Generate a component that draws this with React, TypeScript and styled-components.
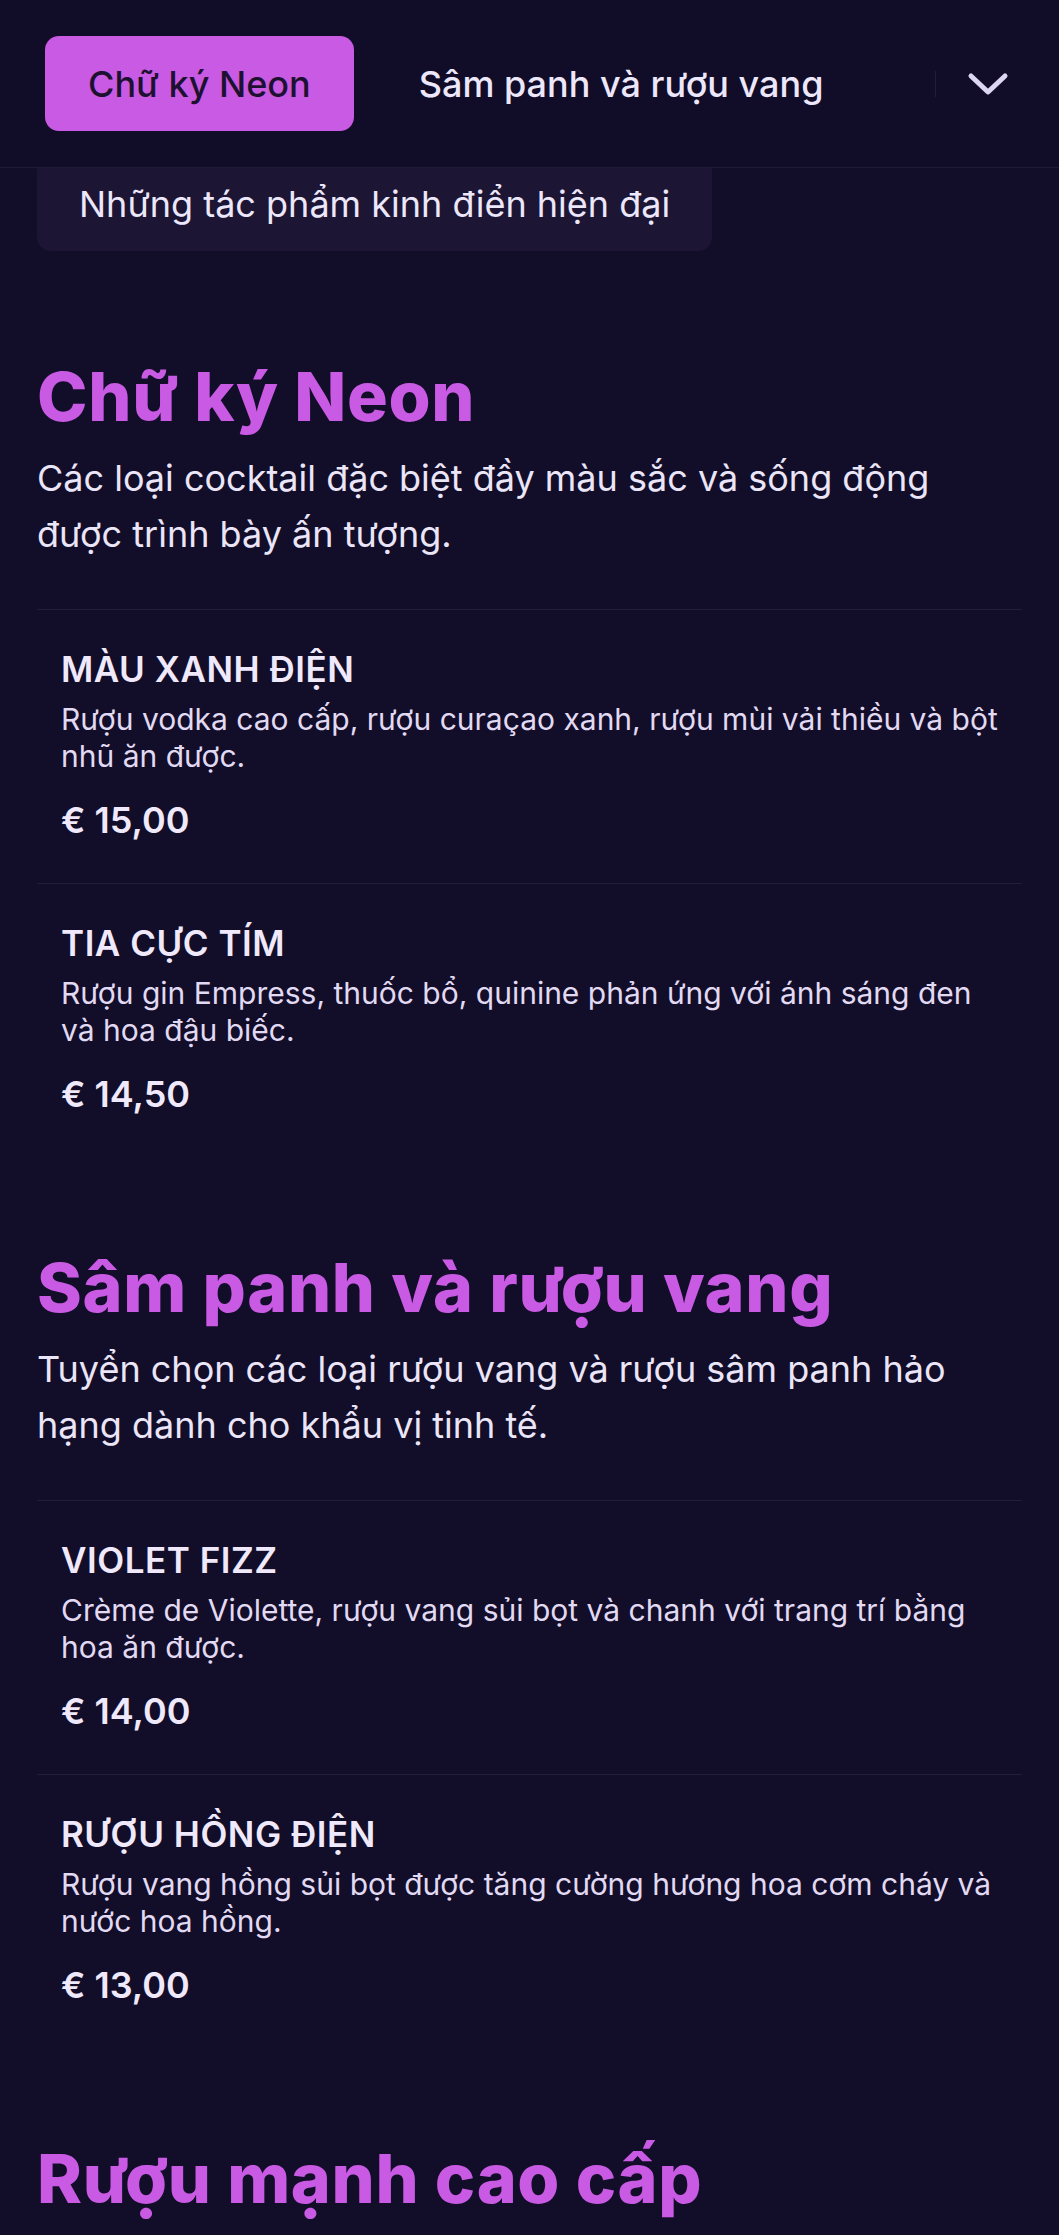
import React from 'react'
import styled, { createGlobalStyle } from 'styled-components'

const BG = '#120d29'
const HEADER_BG = '#110c27'
const ACCENT = '#c95ae3'
const TEXT = '#ece7fa'

const GlobalStyle = createGlobalStyle`
  * {
    box-sizing: border-box;
  }
  html,
  body {
    margin: 0;
    padding: 0;
    background: ${BG};
  }
  body {
    font-family: Inter, 'Noto Sans', sans-serif;
    -webkit-font-smoothing: antialiased;
    color: ${TEXT};
  }
`

const Shell = styled.div`
  display: flex;
  flex-direction: column;
  height: 100vh;
  overflow: hidden;
  background: ${BG};
`

const Header = styled.header`
  flex: none;
  display: flex;
  align-items: center;
  padding: 36px 20px 36px 45px;
  background: ${HEADER_BG};
  border-bottom: 1px solid #1f1a38;
`

const Tabs = styled.nav`
  position: relative;
  flex: 1;
  min-width: 0;
  display: flex;
  gap: 22px;
  overflow: hidden;
  white-space: nowrap;

  &::after {
    content: '';
    position: absolute;
    top: 0;
    right: 0;
    bottom: 0;
    width: 108px;
    background: linear-gradient(to right, rgba(17, 12, 39, 0), ${HEADER_BG} 90%);
    pointer-events: none;
  }
`

const Tab = styled.button<{ $active?: boolean }>`
  flex: none;
  height: 95px;
  padding: 0 43px;
  border: none;
  border-radius: 14px;
  font-family: inherit;
  font-size: 36px;
  font-weight: 500;
  cursor: pointer;
  background: ${({ $active }) => ($active ? ACCENT : 'transparent')};
  color: ${({ $active }) => ($active ? '#1c1131' : TEXT)};
`

const Separator = styled.span`
  flex: none;
  width: 1px;
  height: 26px;
  background: rgba(255, 255, 255, 0.07);
`

const ChevronButton = styled.button`
  flex: none;
  width: 103px;
  height: 95px;
  display: flex;
  align-items: center;
  justify-content: center;
  padding: 0;
  border: none;
  background: transparent;
  color: #dcd6f2;
  cursor: pointer;
`

const Scroll = styled.main`
  flex: 1;
  overflow-y: auto;
  scrollbar-width: none;

  &::-webkit-scrollbar {
    display: none;
  }
`

const SubNav = styled.div`
  display: flex;
  gap: 22px;
  padding: 0 37px;
  margin: -12px 0 15px;
`

const SubPill = styled.button`
  flex: none;
  height: 95px;
  padding: 0 42px;
  border: none;
  border-radius: 14px;
  background: #1c1534;
  color: ${TEXT};
  font-family: inherit;
  font-size: 36px;
  font-weight: 400;
`

const Section = styled.section`
  padding: 90px 37px 0;
`

const SectionTitle = styled.h2`
  margin: 0;
  font-size: 68px;
  font-weight: 800;
  line-height: 80px;
  letter-spacing: 0.01em;
  color: ${ACCENT};
`

const SectionDesc = styled.p`
  margin: 14px 0 0;
  max-width: 960px;
  font-size: 36px;
  line-height: 56px;
  color: #ebe5f8;
`

const ItemList = styled.ul`
  margin: 47px 0 0;
  padding: 0;
  list-style: none;
`

const Item = styled.li`
  padding: 40px 14px 42px 24px;
  border-top: 1px solid #231d3c;
`

const ItemName = styled.h3`
  margin: 0;
  font-size: 35px;
  font-weight: 600;
  line-height: 39px;
  letter-spacing: 0.015em;
  text-transform: uppercase;
  color: #efe9fb;
`

const ItemDesc = styled.p`
  margin: 12px 0 0;
  font-size: 30px;
  line-height: 37px;
  color: #e1daf2;
`

const Price = styled.div`
  margin-top: 24px;
  font-size: 36px;
  font-weight: 600;
  line-height: 42px;
  color: #efe9fb;
`

const ChevronDown = () => (
  <svg width="42" height="24" viewBox="0 0 42 24" fill="none">
    <polyline
      points="4,4 21,20 38,4"
      stroke="currentColor"
      strokeWidth="5"
      strokeLinecap="round"
      strokeLinejoin="round"
    />
  </svg>
)

type MenuItem = { name: string; desc: string; price: string }
type MenuSection = { id: string; title: string; desc: string; items: MenuItem[] }

const sections: MenuSection[] = [
  {
    id: 'neon',
    title: 'Chữ ký Neon',
    desc: 'Các loại cocktail đặc biệt đầy màu sắc và sống động được trình bày ấn tượng.',
    items: [
      {
        name: 'Màu xanh điện',
        desc: 'Rượu vodka cao cấp, rượu curaçao xanh, rượu mùi vải thiều và bột nhũ ăn được.',
        price: '€ 15,00',
      },
      {
        name: 'Tia cực tím',
        desc: 'Rượu gin Empress, thuốc bổ, quinine phản ứng với ánh sáng đen và hoa đậu biếc.',
        price: '€ 14,50',
      },
    ],
  },
  {
    id: 'wine',
    title: 'Sâm panh và rượu vang',
    desc: 'Tuyển chọn các loại rượu vang và rượu sâm panh hảo hạng dành cho khẩu vị tinh tế.',
    items: [
      {
        name: 'Violet Fizz',
        desc: 'Crème de Violette, rượu vang sủi bọt và chanh với trang trí bằng hoa ăn được.',
        price: '€ 14,00',
      },
      {
        name: 'Rượu hồng điện',
        desc: 'Rượu vang hồng sủi bọt được tăng cường hương hoa cơm cháy và nước hoa hồng.',
        price: '€ 13,00',
      },
    ],
  },
  {
    id: 'spirits',
    title: 'Rượu mạnh cao cấp',
    desc: 'Các loại rượu whisky, rum và cognac thượng hạng được tuyển chọn kỹ lưỡng.',
    items: [
      {
        name: 'Whisky mạch nha đơn',
        desc: 'Rượu whisky Scotland ủ 12 năm trong thùng gỗ sồi, phục vụ cùng đá viên.',
        price: '€ 18,00',
      },
    ],
  },
]

export default function App() {
  return (
    <Shell>
      <GlobalStyle />
      <Header>
        <Tabs>
          {sections.map((s, i) => (
            <Tab key={s.id} $active={i === 0}>
              {s.title}
            </Tab>
          ))}
        </Tabs>
        <Separator />
        <ChevronButton aria-label="Mở danh mục">
          <ChevronDown />
        </ChevronButton>
      </Header>
      <Scroll>
        <SubNav>
          <SubPill>Những tác phẩm kinh điển hiện đại</SubPill>
        </SubNav>
        {sections.map(s => (
          <Section key={s.id}>
            <SectionTitle>{s.title}</SectionTitle>
            <SectionDesc>{s.desc}</SectionDesc>
            <ItemList>
              {s.items.map(item => (
                <Item key={item.name}>
                  <ItemName>{item.name}</ItemName>
                  <ItemDesc>{item.desc}</ItemDesc>
                  <Price>{item.price}</Price>
                </Item>
              ))}
            </ItemList>
          </Section>
        ))}
      </Scroll>
    </Shell>
  )
}
